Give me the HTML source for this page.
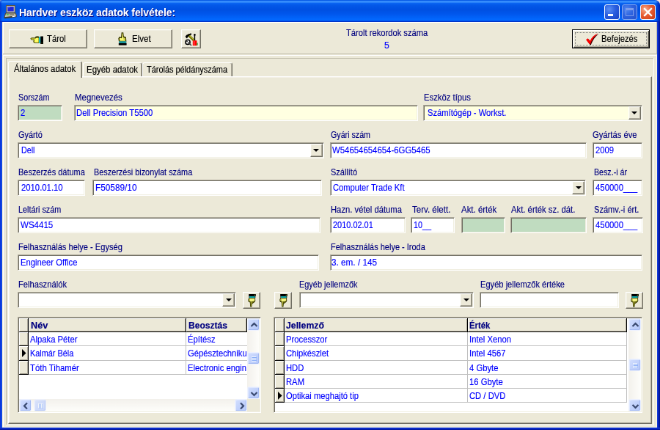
<!DOCTYPE html>
<html lang="hu">
<head>
<meta charset="utf-8">
<title>Hardver eszköz adatok felvétele</title>
<style>
html,body{margin:0;padding:0;}
body{width:660px;height:430px;overflow:hidden;background:#fff;font-family:"Liberation Sans",sans-serif;font-size:11px;line-height:13px;}
#win{will-change:transform;position:absolute;left:0;top:0;width:900px;height:590px;transform:scale(0.733333);transform-origin:0 0;background:#ece9d8;border-radius:3px 7px 0 0;overflow:hidden;}
#title{position:absolute;left:0;top:0;width:900px;height:30px;
 background:linear-gradient(180deg,#0c5fe8 0,#0c5fe8 2%,#3c94ff 6%,#3c94ff 9%,#0a64f2 15%,#0358e8 24%,#0050e2 45%,#0158ee 65%,#0266fc 85%,#0268ff 92%,#0150ea 95%,#0030c4 98%,#0030c4 100%);}
#ttext{position:absolute;left:26px;top:9.1px;color:#fff;font-weight:bold;font-size:14px;line-height:16px;white-space:nowrap;text-shadow:1px 1px 0 #0f1089;}
.bl{position:absolute;background:#0831d9;}
.abs{position:absolute;}
.t{position:absolute;white-space:nowrap;color:#000080;font-size:12.5px;line-height:13px;transform-origin:0 0;-webkit-text-stroke:0.15px currentColor;}
.v{color:#0000ff;}
.k{color:#000;}
.hb{font-weight:bold;color:#000080;}
.f{position:absolute;box-sizing:border-box;background:#fff;border:1px solid;border-color:#aca899 #fff #fff #aca899;box-shadow:inset 1px 1px 0 #716f64, inset -1px -1px 0 #f1efe2;}
.g{background:#c0dcc0;}
.y{background:#ffffe1;}
.b{position:absolute;box-sizing:border-box;background:#ece9d8;border:1px solid;border-color:#fff #716f64 #716f64 #fff;box-shadow:inset -1px -1px 0 #aca899, inset 1px 1px 0 #f1efe2;}
.cb{right:1px;top:1px;width:17px;height:18.5px;}
.cb i{position:absolute;left:3.5px;top:6px;width:0;height:0;border-left:4px solid transparent;border-right:4px solid transparent;border-top:4.5px solid #000;}
.l{position:absolute;}
.tab{position:absolute;box-sizing:border-box;background:#ece9d8;border:1px solid;border-color:#fff #716f64 #ece9d8 #fff;border-bottom:none;border-radius:3px 3px 0 0;box-shadow:inset -1px 0 0 #aca899;}
/* grid */
.hc{position:absolute;box-sizing:border-box;background:#ece9d8;border-right:1px solid #000;border-bottom:1px solid #000;box-shadow:inset 1px 1px 0 #fff, inset -1px -1px 0 #aca899;}
.gl{position:absolute;background:#c0c0c0;}
/* xp scrollbar */
.sbt{position:absolute;background:linear-gradient(90deg,#f3f1ec,#fefefb);}
.sbth{position:absolute;background:linear-gradient(180deg,#f3f1ec,#fefefb);}
.sbb{position:absolute;box-sizing:border-box;width:17px;height:17px;border:0.5px solid #eef2ff;border-radius:2.5px;background:linear-gradient(135deg,#d4e0fe,#c2d2fc 50%,#b6c9fa);box-shadow:inset -1px -1px 0 #a4baf2, inset 1px 1px 0 #dfe8ff;}
.sbb svg{left:1px !important;top:1px !important;}
.sbb svg{position:absolute;left:0;top:0;}
</style>
</head>
<body>
<div style="position:absolute;left:0;top:0;width:5px;height:5px;background:#6a86c0"></div><div style="position:absolute;left:654px;top:0;width:6px;height:6px;background:#f6e4e6"></div>
<div id="win">
<div id="title">
<svg class="abs" style="left:4.5px;top:6.5px" width="19" height="19" viewBox="0 0 18 18">
<rect x="3.5" y="0.5" width="11" height="9" fill="#d6d0b8" stroke="#5a5848" stroke-width="1"/>
<rect x="5" y="2" width="8" height="6" fill="#2424d8"/>
<rect x="5" y="2" width="3" height="2" fill="#4848f0"/>
<path d="M2.5 10.5 L15.5 10.5 L16.5 14 L0.8 16 Z" fill="#c8c4b0" stroke="#504c3c" stroke-width="1"/>
<path d="M0.8 16 L16.5 14 L16.5 15.5 L1.5 17.3 Z" fill="#3c3828"/>
<rect x="3.5" y="11.5" width="3" height="1.5" fill="#48c048"/>
<rect x="7.5" y="11.7" width="6" height="1.2" fill="#706c5c"/>
<path d="M11 15.3 L15.5 14.7 L15.5 13.6 L11 14.2 Z" fill="#fff"/>
</svg>
<div class="abs" style="left:894px;top:0;width:6px;height:30px;background:linear-gradient(90deg,rgba(0,40,190,0),rgba(0,28,170,0.95))"></div><div class="abs" style="left:0;top:0;width:3px;height:30px;background:linear-gradient(90deg,rgba(0,40,200,0.7),rgba(0,40,200,0))"></div>
<div id="ttext" style="letter-spacing:-0.104px">Hardver eszköz adatok felvétele:</div>
<div class="abs" style="left:824px;top:5.5px;width:21px;height:21px;box-sizing:border-box;border:1px solid #fff;border-radius:3px;background:radial-gradient(circle at 30% 30%,#5b90f5 0%,#2a5fe0 45%,#1941c2 100%);"><div class="abs" style="left:4px;top:12px;width:7px;height:3px;background:#fff"></div></div>
<div class="abs" style="left:848px;top:5.5px;width:21px;height:21px;box-sizing:border-box;border:1px solid #86a8f0;border-radius:3px;background:radial-gradient(circle at 30% 30%,#4f86f0 0%,#2f64e0 45%,#2450cc 100%);"><div class="abs" style="left:4px;top:4px;width:11px;height:11px;box-sizing:border-box;border:1px solid #7c9cec;border-top-width:3px"></div></div>
<div class="abs" style="left:872.6px;top:5.5px;width:21px;height:21px;box-sizing:border-box;border:1px solid #fff;border-radius:3px;background:radial-gradient(circle at 30% 30%,#f6ac8c 0%,#e85c32 45%,#cc3c14 100%);"><svg class="abs" style="left:0;top:0" width="19" height="19" viewBox="0 0 19 19"><path d="M5 5 L14 14 M14 5 L5 14" stroke="#fff" stroke-width="2.4" stroke-linecap="square"/></svg></div>
</div>
<div class="abs" style="left:0;top:30px;width:4.2px;height:556px;background:linear-gradient(90deg,#0831d9 0,#0f40e0 30%,#1450e6 72%,#fff6dc 80%,#fff6dc 100%)"></div>
<div class="abs" style="left:896px;top:30px;width:4px;height:556px;background:linear-gradient(90deg,#1a44dc 0,#0c2ccc 30%,#061ca8 65%,#00138c 100%)"></div>
<div class="abs" style="left:0;top:582.8px;width:900px;height:8px;background:linear-gradient(180deg,#1a44dc 0,#0c2ccc 15%,#061ca8 32%,#00138c 50%,#00138c 100%)"></div>
<div class="l" style="left:4px;top:30px;width:892px;height:1px;background:#fff"></div>
<div class="l" style="left:4px;top:30px;width:1px;height:44px;background:#fff"></div>
<div class="l" style="left:4px;top:73px;width:892px;height:1px;background:#c0bdab"></div>
<div class="l" style="left:895px;top:30px;width:1px;height:44px;background:#c0bdab"></div>
<div class="l" style="left:4px;top:75px;width:892px;height:1px;background:#fff"></div>
<div class="l" style="left:4px;top:75px;width:1px;height:507px;background:#fff"></div>
<div class="l" style="left:4px;top:581.7px;width:892px;height:1.1px;background:#fffbe6"></div>
<div class="l" style="left:895px;top:75px;width:1px;height:507px;background:#fffbe6"></div>
<div class="l" style="left:8px;top:79px;width:884px;height:1px;background:#c0bdab"></div>
<div class="l" style="left:8px;top:79px;width:1px;height:500px;background:#c0bdab"></div>
<div class="l" style="left:8px;top:578.7px;width:884px;height:1px;background:#fff"></div>
<div class="l" style="left:891px;top:79px;width:1px;height:500px;background:#fff"></div>
<div class="b " style="left:11.5px;top:39.5px;width:107px;height:26px"><svg class="abs" style="left:28px;top:8px" width="19" height="11" viewBox="0 0 19 11">
<path d="M0.3 3.6 L2 2.3 L6.6 2.3 L7.6 0.8 L10 0.2 L12.2 0.8 L12.2 9.8 L6 9.8 L4.2 8.2 L4.8 5.8 L1.4 5.2 Z" fill="#505000"/>
<path d="M7 2.6 L8.2 1 L12 1 L12 2.4 Z" fill="#202000"/>
<path d="M2 3.4 L7.6 3.4 L8.6 2.6 L11.6 2.6 L11.6 8.8 L6.6 8.8 L5.6 7.6 L6.2 4.8 L2 4.4 Z" fill="#ffff60"/>
<path d="M1.4 3.6 L6 3.6 L6 4.5 L1.6 4.3 Z" fill="#a8a820"/>
<rect x="12.2" y="1.2" width="2.2" height="8.8" fill="#00b8c0"/>
<rect x="14.2" y="0.5" width="3.8" height="10.5" fill="#000"/>
<rect x="15.6" y="9.2" width="1" height="1" fill="#808000"/>
</svg><div class="t k" style="left:51px;top:6.47px;transform:scaleX(0.9024);">Tárol</div></div>
<div class="b " style="left:128px;top:39.5px;width:107px;height:26px"><svg class="abs" style="left:32.3px;top:3px" width="12" height="18" viewBox="0 0 12 18">
<path d="M4.6 0.2 L7.2 0.2 L7.9 5.6 L10.9 6.6 L11.4 12.8 L1 12.8 L0.3 8.5 L1.6 6 L4 6.6 Z" fill="#3c3c00"/>
<path d="M5.5 1.6 L6.3 1.6 L6.8 7 L9.7 7.9 L9.9 11.8 L2.4 11.8 L1.9 8.8 L2.6 7.7 L5.1 8.3 Z" fill="#f8f870"/>
<path d="M7.2 8.2 L9.6 8.4 L9.7 10 L7.4 9.6 Z" fill="#b0b030"/>
<rect x="1.2" y="12.4" width="10" height="2.4" fill="#10b0b8"/>
<rect x="0.8" y="14.6" width="10.8" height="3" fill="#000"/>
</svg><div class="t k" style="left:51px;top:6.47px;transform:scaleX(0.9248);">Elvet</div></div>
<div class="b " style="left:246.5px;top:39.5px;width:27px;height:26px"><svg class="abs" style="left:4px;top:4px" width="18" height="18" viewBox="0 0 18 18">
<path d="M4 2 L13.6 11.2" stroke="#707000" stroke-width="3.2"/>
<path d="M4.6 1.6 L13.8 10.4" stroke="#c0c040" stroke-width="1.2"/>
<path d="M0.3 5.2 L2.2 2.8 L8.4 0.2 L9.4 2 L5.6 3.8 L4.2 5 L3.2 7.2 L1.6 7 L1.8 5.2 Z" fill="#000"/>
<path d="M13.4 2 L13.4 10.5" stroke="#000" stroke-width="1.5"/>
<circle cx="13.4" cy="2.4" r="1.3" fill="#000"/>
<rect x="10.8" y="10.2" width="5.6" height="7" fill="#ff0000"/>
<rect x="12" y="10.2" width="1.2" height="7" fill="#ff6060"/>
<rect x="16.2" y="13.5" width="1.5" height="3.2" fill="#30a030"/>
<circle cx="4" cy="12.4" r="3.1" fill="#d8d8d8" stroke="#000" stroke-width="1.5"/>
<path d="M1.6 10.2 L9 17" stroke="#404040" stroke-width="1.6"/>
<path d="M2.4 13.6 L5.8 10.8" stroke="#fff" stroke-width="1.1"/>
</svg></div>
<div class="t " style="left:472.3px;top:39.27px;transform:scaleX(0.8951);">Tárolt rekordok száma</div>
<div class="t v" style="left:523.7px;top:55.77px;transform:scaleX(0.9781);">5</div>
<div class="abs" style="left:779.5px;top:39.5px;width:106.2px;height:26px;box-sizing:border-box;border:1px solid #000;background:#ece9d8;box-shadow:inset 1px 1px 0 #fff, inset -1px -1px 0 #4a4944, inset 2px 2px 0 #f1efe2, inset -2px -2px 0 #aca899;"><div class="abs" style="left:3px;top:3px;width:98.2px;height:18px;box-sizing:border-box;border:1px dotted #777"></div><svg class="abs" style="left:17px;top:4px" width="18" height="16" viewBox="0 0 18 16">
<path d="M1.5 9.3 L4 7.6 L6.3 11.3 C8.5 7 12 3 17.3 0.7 C12.5 4.6 9.5 9 7 15.5 L5.8 15.5 Z" fill="#400000" transform="translate(0.8,0.6)"/>
<path d="M1 9 L3.8 7.2 L6.2 11 C8.5 6.5 12 2.5 17.3 0.2 C12.5 4.2 9.3 8.8 6.8 15 L5.6 15 Z" fill="#ff0000"/>
</svg><div class="t k" style="left:39px;top:6.47px;transform:scaleX(0.8999);">Befejezés</div></div>
<div class="abs" style="left:10.5px;top:103.5px;width:878.5px;height:474.2px;box-sizing:border-box;border:1px solid;border-color:#fff #716f64 #716f64 #fff;border-left-width:1.6px;box-shadow:inset -1px -1px 0 #aca899, inset 1.6px 1px 0 #f4f2e8"></div>
<div class="tab" style="left:112.5px;top:85px;width:81.5px;height:19px"><div class="t k" style="left:4px;top:3.37px;transform:scaleX(0.9157);">Egyéb adatok</div></div>
<div class="tab" style="left:194px;top:85px;width:123px;height:19px"><div class="t k" style="left:5.4px;top:3.37px;transform:scaleX(0.8747);">Tárolás példányszáma</div></div>
<div class="tab" style="left:10.5px;top:82.5px;width:101.4px;height:23px;border-bottom:none;border-left-width:1.6px"><div class="t k" style="left:7.4px;top:4.57px;transform:scaleX(0.9121);">Általános adatok</div></div>
<div class="t " style="left:25px;top:126.97px;transform:scaleX(0.8618);">Sorszám</div>
<div class="t " style="left:101.7px;top:126.97px;transform:scaleX(0.9143);">Megnevezés</div>
<div class="t " style="left:577.8px;top:126.97px;transform:scaleX(0.9032);">Eszköz típus</div>
<div class="f g" style="left:24px;top:142.7px;width:60.7px;height:22.7px"><div class="t v" style="left:3.3px;top:4.47px;transform:scaleX(0.9000);">2</div></div>
<div class="f y" style="left:100.5px;top:142.7px;width:469.7px;height:22.7px"><div class="t v" style="left:2.5px;top:4.47px;transform:scaleX(0.9069);">Dell Precision T5500</div></div>
<div class="f y" style="left:577px;top:142.7px;width:298.7px;height:22.7px"><div class="t v" style="left:4.5px;top:4.47px;transform:scaleX(0.8954);">Számítógép - Workst.</div><div class="b cb"><i></i></div></div>
<div class="t " style="left:25px;top:177.97px;transform:scaleX(0.8717);">Gyártó</div>
<div class="t " style="left:450.8px;top:177.97px;transform:scaleX(0.8544);">Gyári szám</div>
<div class="t " style="left:808px;top:177.97px;transform:scaleX(0.8993);">Gyártás éve</div>
<div class="f " style="left:24px;top:193.7px;width:417.7px;height:22.7px"><div class="t v" style="left:4px;top:4.47px;transform:scaleX(0.8591);">Dell</div><div class="b cb"><i></i></div></div>
<div class="f " style="left:449.5px;top:193.7px;width:350.2px;height:22.7px"><div class="t v" style="left:2.5px;top:4.47px;transform:scaleX(0.9111);">W54654654654-6GG5465</div></div>
<div class="f " style="left:808px;top:193.7px;width:68.2px;height:22.7px"><div class="t v" style="left:3.2px;top:4.47px;transform:scaleX(0.8990);">2009</div></div>
<div class="t " style="left:25px;top:228.97px;transform:scaleX(0.8771);">Beszerzés dátuma</div>
<div class="t " style="left:127.5px;top:228.97px;transform:scaleX(0.8701);">Beszerzési bizonylat száma</div>
<div class="t " style="left:450.8px;top:228.97px;transform:scaleX(0.8782);">Szállító</div>
<div class="t " style="left:810.3px;top:228.97px;transform:scaleX(0.8524);">Besz.-i ár</div>
<div class="f " style="left:24px;top:244.7px;width:91.7px;height:22.7px"><div class="t v" style="left:3.6px;top:4.47px;transform:scaleX(0.9047);">2010.01.10</div></div>
<div class="f " style="left:126.3px;top:244.7px;width:312.5px;height:22.7px"><div class="t v" style="left:2.4px;top:4.47px;transform:scaleX(0.9453);">F50589/10</div></div>
<div class="f " style="left:449.5px;top:244.7px;width:349.7px;height:22.7px"><div class="t v" style="left:3.5px;top:4.47px;transform:scaleX(0.8939);">Computer Trade Kft</div><div class="b cb"><i></i></div></div>
<div class="f " style="left:808px;top:244.7px;width:68.2px;height:22.7px"><div class="t v" style="left:3.2px;top:4.47px;transform:scaleX(0.9110);">450000___</div></div>
<div class="t " style="left:25px;top:279.97px;transform:scaleX(0.8652);">Leltári szám</div>
<div class="t " style="left:450.8px;top:279.97px;transform:scaleX(0.8998);">Hazn. vétel dátuma</div>
<div class="t " style="left:562.1px;top:279.97px;transform:scaleX(0.9236);">Terv. élett.</div>
<div class="t " style="left:629.3px;top:279.97px;transform:scaleX(0.9149);">Akt. érték</div>
<div class="t " style="left:697.3px;top:279.97px;transform:scaleX(0.9041);">Akt. érték sz. dát.</div>
<div class="t " style="left:809.6px;top:279.97px;transform:scaleX(0.8870);">Számv.-i ért.</div>
<div class="f " style="left:24px;top:295.7px;width:413.2px;height:22.7px"><div class="t v" style="left:2.9px;top:4.47px;transform:scaleX(0.9219);">WS4415</div></div>
<div class="f " style="left:449.5px;top:295.7px;width:103.2px;height:22.7px"><div class="t v" style="left:3.2px;top:4.47px;transform:scaleX(0.8759);">2010.02.01</div></div>
<div class="f " style="left:560.2px;top:295.7px;width:59.5px;height:22.7px"><div class="t v" style="left:3.1px;top:4.47px;transform:scaleX(0.8631);">10__</div></div>
<div class="f g" style="left:628.5px;top:295.7px;width:60.2px;height:22.7px"></div>
<div class="f g" style="left:696.1px;top:295.7px;width:103.6px;height:22.7px"></div>
<div class="f " style="left:808px;top:295.7px;width:68.7px;height:22.7px"><div class="t v" style="left:3.2px;top:4.47px;transform:scaleX(0.9110);">450000___</div></div>
<div class="t " style="left:25px;top:330.97px;transform:scaleX(0.8879);">Felhasználás helye - Egység</div>
<div class="t " style="left:450.8px;top:330.97px;transform:scaleX(0.8785);">Felhasználás helye - Iroda</div>
<div class="f " style="left:24px;top:346.7px;width:410.7px;height:22.7px"><div class="t v" style="left:2.6px;top:4.47px;transform:scaleX(0.9007);">Engineer Office</div></div>
<div class="f " style="left:449.5px;top:346.7px;width:426.7px;height:22.7px"><div class="t v" style="left:1.5px;top:4.47px;transform:scaleX(0.9393);">3. em. / 145</div></div>
<div class="t " style="left:25px;top:381.77px;transform:scaleX(0.8961);">Felhasználók</div>
<div class="t " style="left:408.3px;top:381.77px;transform:scaleX(0.8735);">Egyéb jellemzők</div>
<div class="t " style="left:655px;top:381.77px;transform:scaleX(0.8899);">Egyéb jellemzők értéke</div>
<div class="f " style="left:24px;top:397.5px;width:298.4px;height:22.7px"><div class="b cb"><i></i></div></div>
<div class="b " style="left:330.8px;top:398px;width:24.5px;height:22.8px"><svg class="abs" style="left:6.5px;top:2px" width="12" height="18" viewBox="-0.5 0 12 18">
<rect x="0.7" y="0" width="9.6" height="3" fill="#000"/>
<rect x="8.2" y="0.8" width="1.1" height="1.1" fill="#c8c820"/>
<rect x="0.9" y="2.8" width="8.9" height="2.7" fill="#202020"/>
<rect x="1.5" y="3" width="7.6" height="2" fill="#10a8a8"/>
<path d="M0.8 5.3 L9.4 5.3 L9.8 9 L8.8 11 L6.6 12.6 L5.4 13.2 L4.9 17.4 L2.7 17.4 L2.3 11.6 L0.2 10.4 L-0.3 7.7 Z" fill="#3c3c00"/>
<path d="M1.8 6 L8.6 6 L8.8 8.7 L7.6 9.8 L4.6 10.3 L2.4 10 L1 9 L0.8 7.6 Z" fill="#f4f480"/>
<path d="M3.2 10.3 L4.4 10.4 L4.1 16.4 L3.5 16.4 Z" fill="#d8d850"/>
<path d="M4.9 10.6 L8 10.2 L6.2 12 L5.1 12.6 Z" fill="#707010"/>
<path d="M0.8 7.2 L2 7 L2.2 9 L1.2 8.8 Z" fill="#909020"/>
</svg></div>
<div class="b " style="left:373.8px;top:398px;width:24.5px;height:22.8px"><svg class="abs" style="left:6.5px;top:2px" width="12" height="18" viewBox="-0.5 0 12 18">
<rect x="0.7" y="0" width="9.6" height="3" fill="#000"/>
<rect x="8.2" y="0.8" width="1.1" height="1.1" fill="#c8c820"/>
<rect x="0.9" y="2.8" width="8.9" height="2.7" fill="#202020"/>
<rect x="1.5" y="3" width="7.6" height="2" fill="#10a8a8"/>
<path d="M0.8 5.3 L9.4 5.3 L9.8 9 L8.8 11 L6.6 12.6 L5.4 13.2 L4.9 17.4 L2.7 17.4 L2.3 11.6 L0.2 10.4 L-0.3 7.7 Z" fill="#3c3c00"/>
<path d="M1.8 6 L8.6 6 L8.8 8.7 L7.6 9.8 L4.6 10.3 L2.4 10 L1 9 L0.8 7.6 Z" fill="#f4f480"/>
<path d="M3.2 10.3 L4.4 10.4 L4.1 16.4 L3.5 16.4 Z" fill="#d8d850"/>
<path d="M4.9 10.6 L8 10.2 L6.2 12 L5.1 12.6 Z" fill="#707010"/>
<path d="M0.8 7.2 L2 7 L2.2 9 L1.2 8.8 Z" fill="#909020"/>
</svg></div>
<div class="f " style="left:407.8px;top:397.5px;width:238.6px;height:22.7px"><div class="b cb"><i></i></div></div>
<div class="f " style="left:654.1px;top:397.5px;width:189.6px;height:22.7px"></div>
<div class="b " style="left:852.5px;top:398px;width:24.5px;height:22.8px"><svg class="abs" style="left:6.5px;top:2px" width="12" height="18" viewBox="-0.5 0 12 18">
<rect x="0.7" y="0" width="9.6" height="3" fill="#000"/>
<rect x="8.2" y="0.8" width="1.1" height="1.1" fill="#c8c820"/>
<rect x="0.9" y="2.8" width="8.9" height="2.7" fill="#202020"/>
<rect x="1.5" y="3" width="7.6" height="2" fill="#10a8a8"/>
<path d="M0.8 5.3 L9.4 5.3 L9.8 9 L8.8 11 L6.6 12.6 L5.4 13.2 L4.9 17.4 L2.7 17.4 L2.3 11.6 L0.2 10.4 L-0.3 7.7 Z" fill="#3c3c00"/>
<path d="M1.8 6 L8.6 6 L8.8 8.7 L7.6 9.8 L4.6 10.3 L2.4 10 L1 9 L0.8 7.6 Z" fill="#f4f480"/>
<path d="M3.2 10.3 L4.4 10.4 L4.1 16.4 L3.5 16.4 Z" fill="#d8d850"/>
<path d="M4.9 10.6 L8 10.2 L6.2 12 L5.1 12.6 Z" fill="#707010"/>
<path d="M0.8 7.2 L2 7 L2.2 9 L1.2 8.8 Z" fill="#909020"/>
</svg></div>
<div class="f" style="left:24px;top:432px;width:332px;height:131.4px;overflow:hidden"><div class="abs" style="left:1px;top:1px;width:328px;height:127.4px;overflow:hidden"><div class="hc" style="left:0;top:0;width:12.5px;height:19.2px"></div><div class="hc" style="left:12.5px;top:0;width:215px;height:19.2px;overflow:hidden"><div class="t hb" style="left:3.4px;top:3.57px;transform:scaleX(1.0205);">Név</div></div><div class="hc" style="left:227.5px;top:0;width:83.5px;height:19.2px;overflow:hidden"><div class="t hb" style="left:3.4px;top:3.57px;transform:scaleX(0.9657);">Beosztás</div></div><div class="hc" style="left:0;top:19.2px;width:12.5px;height:19.2px"></div><div class="abs" style="left:12.5px;top:19.2px;width:214px;height:18.2px;overflow:hidden"><div class="t v" style="left:2.8px;top:3.97px;transform:scaleX(0.8998);">Alpaka Péter</div></div><div class="gl" style="left:226.5px;top:19.2px;width:1px;height:19.2px"></div><div class="abs" style="left:227.5px;top:19.2px;width:82.5px;height:18.2px;overflow:hidden"><div class="t v" style="left:2.8px;top:3.97px;transform:scaleX(0.9000);">Építész</div></div><div class="gl" style="left:12.5px;top:37.4px;width:298.5px;height:1px"></div><div class="hc" style="left:0;top:38.4px;width:12.5px;height:19.2px"><svg class="abs" style="left:3.5px;top:3.6px" width="6" height="11" viewBox="0 0 6 11"><path d="M0 0 L5.5 5.5 L0 11 Z" fill="#000"/></svg></div><div class="abs" style="left:12.5px;top:38.4px;width:214px;height:18.2px;overflow:hidden"><div class="t v" style="left:2.8px;top:3.97px;transform:scaleX(0.8710);">Kalmár Béla</div></div><div class="gl" style="left:226.5px;top:38.4px;width:1px;height:19.2px"></div><div class="abs" style="left:227.5px;top:38.4px;width:82.5px;height:18.2px;overflow:hidden"><div class="t v" style="left:2.8px;top:3.97px;transform:scaleX(0.9000);">Gépésztechnikus</div></div><div class="gl" style="left:12.5px;top:56.6px;width:298.5px;height:1px"></div><div class="hc" style="left:0;top:57.6px;width:12.5px;height:19.2px"></div><div class="abs" style="left:12.5px;top:57.6px;width:214px;height:18.2px;overflow:hidden"><div class="t v" style="left:2.8px;top:3.97px;transform:scaleX(0.9071);">Tóth Tihamér</div></div><div class="gl" style="left:226.5px;top:57.6px;width:1px;height:19.2px"></div><div class="abs" style="left:227.5px;top:57.6px;width:82.5px;height:18.2px;overflow:hidden"><div class="t v" style="left:2.8px;top:3.97px;transform:scaleX(0.9000);">Electronic engineer</div></div><div class="gl" style="left:12.5px;top:75.8px;width:298.5px;height:1px"></div><div class="sbt" style="left:311px;top:0;width:17px;height:110.4px"></div><div class="sbb" style="left:311px;top:0"><svg width="15" height="15" viewBox="0 0 15 15"><path d="M3.5 9 L7.5 5 L11.5 9" fill="none" stroke="#3a4a70" stroke-width="2.2"/></svg></div><div class="sbb" style="left:311px;top:93.4px"><svg width="15" height="15" viewBox="0 0 15 15"><path d="M3.5 6 L7.5 10 L11.5 6" fill="none" stroke="#3a4a70" stroke-width="2.2"/></svg></div><div class="sbb" style="left:311px;top:46px"><svg width="15" height="15" viewBox="0 0 15 15"><path d="M4 4.5 H10 M4 6.5 H10 M4 8.5 H10 M4 10.5 H10" stroke="#eef4fe" stroke-width="1"/><path d="M5 5.5 H11 M5 7.5 H11 M5 9.5 H11" stroke="#8cb0f8" stroke-width="1"/></svg></div><div class="sbth" style="left:0;top:110.4px;width:311px;height:17px"></div><div class="sbb" style="left:0;top:110.4px"><svg width="15" height="15" viewBox="0 0 15 15"><path d="M9 3.5 L5 7.5 L9 11.5" fill="none" stroke="#3a4a70" stroke-width="2.2"/></svg></div><div class="sbb" style="left:294px;top:110.4px"><svg width="15" height="15" viewBox="0 0 15 15"><path d="M6 3.5 L10 7.5 L6 11.5" fill="none" stroke="#3a4a70" stroke-width="2.2"/></svg></div><div class="sbb" style="left:19.5px;top:110.4px;opacity:.75"><svg width="15" height="15" viewBox="0 0 15 15"><path d="M4.5 4 V10 M6.5 4 V10 M8.5 4 V10 M10.5 4 V10" stroke="#eef4fe" stroke-width="1"/><path d="M5.5 5 V11 M7.5 5 V11 M9.5 5 V11" stroke="#8cb0f8" stroke-width="1"/></svg></div><div class="abs" style="left:311px;top:110.4px;width:17px;height:17px;background:#ece9d8"></div></div></div>
<div class="f" style="left:372.6px;top:432px;width:503.4px;height:131.4px;overflow:hidden"><div class="abs" style="left:1px;top:1px;width:499.4px;height:127.4px;overflow:hidden"><div class="hc" style="left:0;top:0;width:13.2px;height:19.2px"></div><div class="hc" style="left:13.2px;top:0;width:250px;height:19.2px;overflow:hidden"><div class="t hb" style="left:2.2px;top:3.57px;transform:scaleX(0.9848);">Jellemző</div></div><div class="hc" style="left:263.2px;top:0;width:217px;height:19.2px;overflow:hidden"><div class="t hb" style="left:2.2px;top:3.57px;transform:scaleX(0.9000);">Érték</div></div><div class="hc" style="left:0;top:19.2px;width:13.2px;height:19.2px"></div><div class="abs" style="left:13.2px;top:19.2px;width:249px;height:18.2px;overflow:hidden"><div class="t v" style="left:2.2px;top:3.97px;transform:scaleX(0.9000);">Processzor</div></div><div class="gl" style="left:262.2px;top:19.2px;width:1px;height:19.2px"></div><div class="abs" style="left:263.2px;top:19.2px;width:216px;height:18.2px;overflow:hidden"><div class="t v" style="left:2.2px;top:3.97px;transform:scaleX(0.9000);">Intel Xenon</div></div><div class="gl" style="left:479.2px;top:19.2px;width:1px;height:19.2px"></div><div class="gl" style="left:13.2px;top:37.4px;width:467px;height:1px"></div><div class="hc" style="left:0;top:38.4px;width:13.2px;height:19.2px"></div><div class="abs" style="left:13.2px;top:38.4px;width:249px;height:18.2px;overflow:hidden"><div class="t v" style="left:2.2px;top:3.97px;transform:scaleX(0.9000);">Chipkészlet</div></div><div class="gl" style="left:262.2px;top:38.4px;width:1px;height:19.2px"></div><div class="abs" style="left:263.2px;top:38.4px;width:216px;height:18.2px;overflow:hidden"><div class="t v" style="left:2.2px;top:3.97px;transform:scaleX(0.9000);">Intel 4567</div></div><div class="gl" style="left:479.2px;top:38.4px;width:1px;height:19.2px"></div><div class="gl" style="left:13.2px;top:56.6px;width:467px;height:1px"></div><div class="hc" style="left:0;top:57.6px;width:13.2px;height:19.2px"></div><div class="abs" style="left:13.2px;top:57.6px;width:249px;height:18.2px;overflow:hidden"><div class="t v" style="left:2.2px;top:3.97px;transform:scaleX(0.9000);">HDD</div></div><div class="gl" style="left:262.2px;top:57.6px;width:1px;height:19.2px"></div><div class="abs" style="left:263.2px;top:57.6px;width:216px;height:18.2px;overflow:hidden"><div class="t v" style="left:2.2px;top:3.97px;transform:scaleX(0.9000);">4 Gbyte</div></div><div class="gl" style="left:479.2px;top:57.6px;width:1px;height:19.2px"></div><div class="gl" style="left:13.2px;top:75.8px;width:467px;height:1px"></div><div class="hc" style="left:0;top:76.8px;width:13.2px;height:19.2px"></div><div class="abs" style="left:13.2px;top:76.8px;width:249px;height:18.2px;overflow:hidden"><div class="t v" style="left:2.2px;top:3.97px;transform:scaleX(0.9000);">RAM</div></div><div class="gl" style="left:262.2px;top:76.8px;width:1px;height:19.2px"></div><div class="abs" style="left:263.2px;top:76.8px;width:216px;height:18.2px;overflow:hidden"><div class="t v" style="left:2.2px;top:3.97px;transform:scaleX(0.9000);">16 Gbyte</div></div><div class="gl" style="left:479.2px;top:76.8px;width:1px;height:19.2px"></div><div class="gl" style="left:13.2px;top:95px;width:467px;height:1px"></div><div class="hc" style="left:0;top:96px;width:13.2px;height:19.2px"><svg class="abs" style="left:4.2px;top:3.6px" width="6" height="11" viewBox="0 0 6 11"><path d="M0 0 L5.5 5.5 L0 11 Z" fill="#000"/></svg></div><div class="abs" style="left:13.2px;top:96px;width:249px;height:18.2px;overflow:hidden"><div class="t v" style="left:2.2px;top:3.97px;transform:scaleX(0.8952);">Optikai meghajtó tip</div></div><div class="gl" style="left:262.2px;top:96px;width:1px;height:19.2px"></div><div class="abs" style="left:263.2px;top:96px;width:216px;height:18.2px;overflow:hidden"><div class="t v" style="left:2.2px;top:3.97px;transform:scaleX(0.9000);">CD / DVD</div></div><div class="gl" style="left:479.2px;top:96px;width:1px;height:19.2px"></div><div class="gl" style="left:13.2px;top:114.2px;width:467px;height:1px"></div><div class="sbt" style="left:482.4px;top:0;width:17px;height:127.4px"></div><div class="sbb" style="left:482.4px;top:0"><svg width="15" height="15" viewBox="0 0 15 15"><path d="M3.5 9 L7.5 5 L11.5 9" fill="none" stroke="#3a4a70" stroke-width="2.2"/></svg></div><div class="sbb" style="left:482.4px;top:110.4px"><svg width="15" height="15" viewBox="0 0 15 15"><path d="M3.5 6 L7.5 10 L11.5 6" fill="none" stroke="#3a4a70" stroke-width="2.2"/></svg></div><div class="sbb" style="left:482.4px;top:55px"><svg width="15" height="15" viewBox="0 0 15 15"><path d="M4 4.5 H10 M4 6.5 H10 M4 8.5 H10 M4 10.5 H10" stroke="#eef4fe" stroke-width="1"/><path d="M5 5.5 H11 M5 7.5 H11 M5 9.5 H11" stroke="#8cb0f8" stroke-width="1"/></svg></div></div></div>
</div>
</body>
</html>
